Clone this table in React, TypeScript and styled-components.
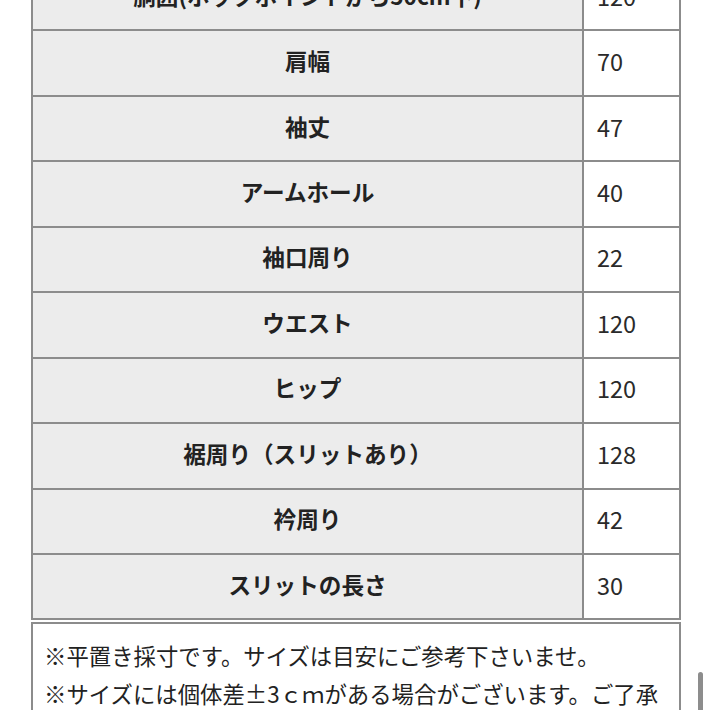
import * as React from 'react'
import styled, { createGlobalStyle } from 'styled-components'

const GlobalStyle = createGlobalStyle`
  html, body {
    margin: 0;
    padding: 0;
    background: #ffffff;
  }
  body {
    font-family: "Noto Sans CJK JP", "Noto Sans", sans-serif;
    color: #1f1f1f;
    overflow: hidden;
  }
`

const Page = styled.div`
  position: relative;
  width: 710px;
  height: 710px;
  overflow: hidden;
`

const Content = styled.div`
  margin-top: -36px;
  padding: 0 29px 0 31px;
`

const SizeTable = styled.table`
  width: 100%;
  border-collapse: separate;
  border-spacing: 0;
  border: 1px solid #8c8c8c;
`

const LabelCell = styled.th`
  box-sizing: border-box;
  width: 551px;
  height: 65.44px;
  padding: 0 0 5px 0;
  background: #ececec;
  border: 1px solid #8c8c8c;
  font-size: 22.6px;
  font-weight: 700;
  text-align: center;
  vertical-align: middle;
  color: #222;
`

const ValueCell = styled.td`
  box-sizing: border-box;
  height: 65.44px;
  padding: 0 0 4px 13px;
  background: #ffffff;
  border: 1px solid #8c8c8c;
  font-size: 23.5px;
  font-weight: 400;
  text-align: left;
  vertical-align: middle;
  color: #2a2a2a;
`

const NoteBox = styled.div`
  margin-top: 2px;
  border: 2px solid #8c8c8c;
  padding: 12px 8px 10px 11px;
  font-size: 22.4px;
  line-height: 38px;
  color: #222;
`

const NoteLine = styled.p`
  margin: 0;
`

const ScrollIndicator = styled.div`
  position: absolute;
  right: 7px;
  top: 672px;
  width: 5px;
  height: 60px;
  border-radius: 3px;
  background: #8d8d8d;
`

interface IRow {
  label: string
  value: string
}

const rows: IRow[] = [
  { label: '胴囲(ホックポイントから50cm下)', value: '120' },
  { label: '肩幅', value: '70' },
  { label: '袖丈', value: '47' },
  { label: 'アームホール', value: '40' },
  { label: '袖口周り', value: '22' },
  { label: 'ウエスト', value: '120' },
  { label: 'ヒップ', value: '120' },
  { label: '裾周り（スリットあり）', value: '128' },
  { label: '衿周り', value: '42' },
  { label: 'スリットの長さ', value: '30' }
]

export default function App() {
  return (
    <Page>
      <GlobalStyle />
      <Content>
        <SizeTable>
          <tbody>
            {rows.map(row => (
              <tr key={row.label}>
                <LabelCell>{row.label}</LabelCell>
                <ValueCell>{row.value}</ValueCell>
              </tr>
            ))}
          </tbody>
        </SizeTable>
        <NoteBox>
          <NoteLine>※平置き採寸です。サイズは目安にご参考下さいませ。</NoteLine>
          <NoteLine>※サイズには個体差±3ｃｍがある場合がございます。ご了承ください。</NoteLine>
        </NoteBox>
      </Content>
      <ScrollIndicator />
    </Page>
  )
}
